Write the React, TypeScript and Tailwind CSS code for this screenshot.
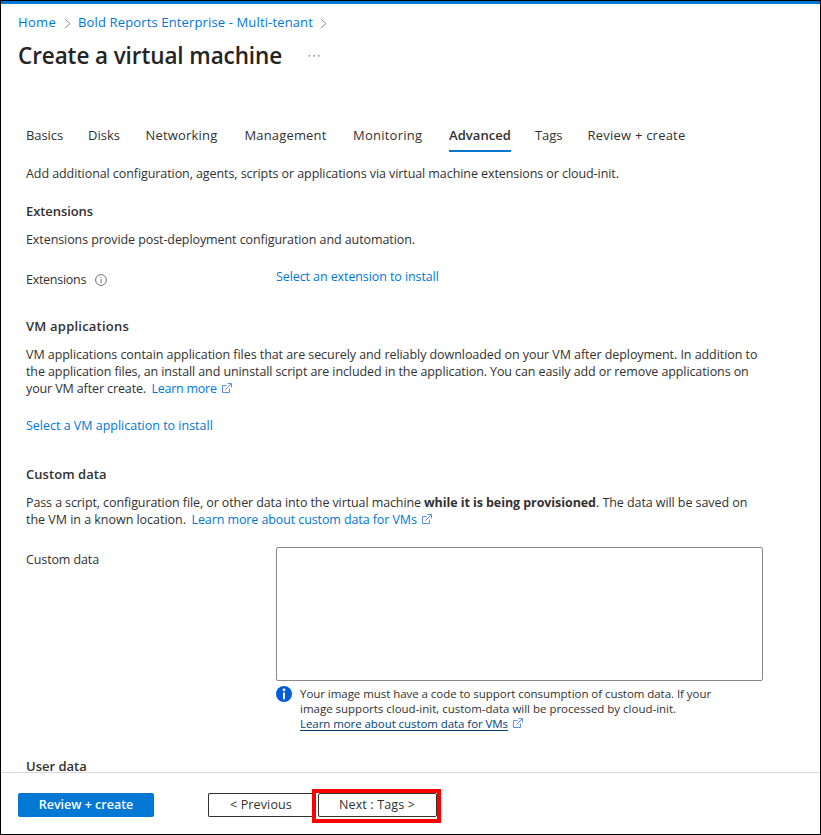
import type { ReactNode } from 'react';

function ExternalIcon({ className = '' }: { className?: string }) {
  return (
    <svg viewBox="0 0 11 11" className={`inline-block h-[11px] w-[11px] ${className}`} fill="none" stroke="#4a86e0" strokeWidth="0.9">
      <path d="M5.5 2.5H1.5V9.5H8.5V5.5" />
      <path d="M4.4 6.6L10 1M6.6 0.5H10.5V4.4" />
    </svg>
  );
}

function Chevron() {
  return (
    <svg viewBox="0 0 7 11" className="h-[11px] w-[7px]" fill="none" stroke="#8a8886" strokeWidth="1">
      <path d="M0.8 0.8L6 5.5L0.8 10.2" />
    </svg>
  );
}

function InfoOutline() {
  return (
    <svg viewBox="0 0 12 12" className="ml-[9px] h-3 w-3" fill="none" stroke="#605e5c" strokeWidth="0.9">
      <circle cx="6" cy="6" r="5.4" />
      <path d="M6 5V9M6 3V4" />
    </svg>
  );
}

function InfoFilled() {
  return (
    <svg viewBox="0 0 16 16" className="h-4 w-4 shrink-0">
      <circle cx="8" cy="8" r="8" fill="#015cda" />
      <path d="M7 6.4H9V13.2H7z" fill="#fff" />
      <circle cx="8" cy="3.9" r="1.4" fill="#fff" />
    </svg>
  );
}

function Line({ className, children }: { className: string; children: ReactNode }) {
  return <div className={`h-[17px] shrink-0 whitespace-nowrap leading-[17px] ${className}`}>{children}</div>;
}

const tabs = [
  { label: 'Basics', style: 'w-[62px] tracking-[-0.087px]' },
  { label: 'Disks', style: 'w-[57.5px] tracking-[0.01px]' },
  { label: 'Networking', style: 'w-[99px] tracking-[0.193px]' },
  { label: 'Management', style: 'w-[108.5px] tracking-[0.159px]' },
  { label: 'Monitoring', style: 'w-[96px] tracking-[0.235px]' },
  { label: 'Advanced', style: 'w-[86px] tracking-[0.066px]', active: true },
  { label: 'Tags', style: 'w-[52.5px] tracking-[-0.1px]' },
  { label: 'Review + create', style: 'w-[110px] tracking-[0.223px]' },
];

export default function App() {
  return (
    <div className="flex h-[835px] w-[821px] flex-col overflow-hidden border border-black bg-white font-['Open_Sans','Noto_Sans',sans-serif] text-[12.5px] text-[#323130]">
      <div className="h-[3px] shrink-0 bg-[#0078d4]" />

      <header className="h-[116px] shrink-0 pl-[17px]">
        <nav className="flex h-9 items-center whitespace-nowrap pt-[2px] text-[13px] text-[#0078d4]">
          <a className="w-[46px] tracking-[0.315px]">Home</a>
          <Chevron />
          <a className="ml-[7px] w-[242px] tracking-[0.141px]">Bold Reports Enterprise - Multi-tenant</a>
          <Chevron />
        </nav>
        <div className="flex h-8 items-center">
          <h1 className="w-[290px] whitespace-nowrap text-[22.5px] font-semibold leading-8 tracking-[-0.1px] text-[#252423]">Create a virtual machine</h1>
          <svg viewBox="0 0 12 2" className="h-[2px] w-3" fill="#605e5c">
            <path d="M0.6 0.3h1.3v1.3h-1.3zM5.4 0.3h1.3v1.3h-1.3zM10.2 0.3h1.3v1.3h-1.3z" />
          </svg>
        </div>
      </header>

      <main className="flex h-[652px] shrink-0 flex-col pl-[25px]">
        <div className="flex h-8 shrink-0 text-[13px]">
          {tabs.map((t) => (
            <div key={t.label} className={`shrink-0 whitespace-nowrap ${t.style}`}>
              <span className={t.active ? 'inline-block h-8 w-[62px] border-b-2 border-[#0078d4] font-semibold leading-[31px]' : 'inline-block h-8 leading-[31px]'}>
                {t.label}
              </span>
            </div>
          ))}
        </div>

        <Line className="mt-[13px] tracking-[-0.077px]">
          Add additional configuration, agents, scripts or applications via virtual machine extensions or cloud-init.
        </Line>
        <Line className="mt-[21px] text-[13px] font-semibold tracking-[-0.078px]">Extensions</Line>
        <Line className="mt-[11px] tracking-[-0.083px]">Extensions provide post-deployment configuration and automation.</Line>
        <div className="mt-[20px] flex h-5 shrink-0">
          <div className="flex w-[250px] items-center pt-[3px]">
            <span className="leading-[17px] tracking-[-0.28px]">Extensions</span>
            <InfoOutline />
          </div>
          <a className="leading-[17px] tracking-[-0.095px] text-[#0078d4]">Select an extension to install</a>
        </div>

        <Line className="mt-[30px] text-[13px] font-semibold tracking-[0.219px]">VM applications</Line>
        <Line className="mt-[11px] tracking-[-0.062px]">
          VM applications contain application files that are securely and reliably downloaded on your VM after deployment. In addition to
        </Line>
        <Line className="tracking-[-0.095px]">
          the application files, an install and uninstall script are included in the application. You can easily add or remove applications on
        </Line>
        <Line className="flex tracking-[-0.12px]">
          <span className="w-[125.5px]">your VM after create.</span>
          <a className="tracking-[-0.25px] text-[#0078d4]">Learn more</a>
          <ExternalIcon className="ml-[4px] mt-[3px]" />
        </Line>
        <Line className="mt-[20px] tracking-[-0.01px] text-[#0078d4]">Select a VM application to install</Line>

        <Line className="mt-[32px] text-[13px] font-semibold tracking-[0.05px]">Custom data</Line>
        <Line className="mt-[11px] flex tracking-[-0.1px]">
          <span className="w-[398px]">Pass a script, configuration file, or other data into the virtual machine</span>
          <b className="w-[172px] font-bold tracking-[-0.075px]">while it is being provisioned</b>
          <span className="tracking-[-0.07px]">. The data will be saved on</span>
        </Line>
        <Line className="flex">
          <span className="w-[165.5px] tracking-[-0.025px]">the VM in a known location.</span>
          <a className="tracking-[-0.1px] text-[#0078d4]">Learn more about custom data for VMs</a>
          <ExternalIcon className="ml-[4px] mt-[3px]" />
        </Line>

        <div className="mt-[19px] flex h-[187px] shrink-0">
          <div className="w-[250px] pt-[4px] leading-[17px] tracking-[-0.12px]">Custom data</div>
          <div>
            <textarea aria-label="Custom data" className="block h-[134px] w-[487px] resize-none rounded-[2px] border border-[#8a8886] bg-white" />
            <div className="mt-[5px] flex text-[11.5px] leading-[15px]">
              <InfoFilled />
              <div className="ml-[8px] whitespace-nowrap">
                <div className="tracking-[-0.05px]">Your image must have a code to support consumption of custom data. If your</div>
                <div className="tracking-[-0.01px]">image supports cloud-init, custom-data will be processed by cloud-init.</div>
                <div className="flex">
                  <a className="tracking-[-0.07px] text-[#004578] underline underline-offset-2">Learn more about custom data for VMs</a>
                  <ExternalIcon className="ml-[4px] mt-[2px]" />
                </div>
              </div>
            </div>
          </div>
        </div>

        <Line className="mt-[24px] text-[13px] font-semibold">User data</Line>
      </main>

      <footer className="flex h-[62px] shrink-0 items-start border-t border-[#d9d9d9] pl-[17px] pt-[16px] text-[12.5px]">
        <button className="mt-[4px] h-6 w-[136px] rounded-[2px] bg-[#0078d4] font-semibold text-white">Review + create</button>
        <button className="ml-[54px] mt-[4px] h-6 w-[104px] rounded-l-[2px] border border-r-0 border-[#323130] pl-px tracking-[0.13px]">&lt; Previous</button>
        <div className="flex h-[34px] w-[129px] border-4 border-[#fe0000] pl-[2px]">
          <button className="h-6 w-[119px] rounded-[2px] border border-[#323130] pr-px tracking-[0.15px]">Next : Tags &gt;</button>
        </div>
      </footer>
    </div>
  );
}
